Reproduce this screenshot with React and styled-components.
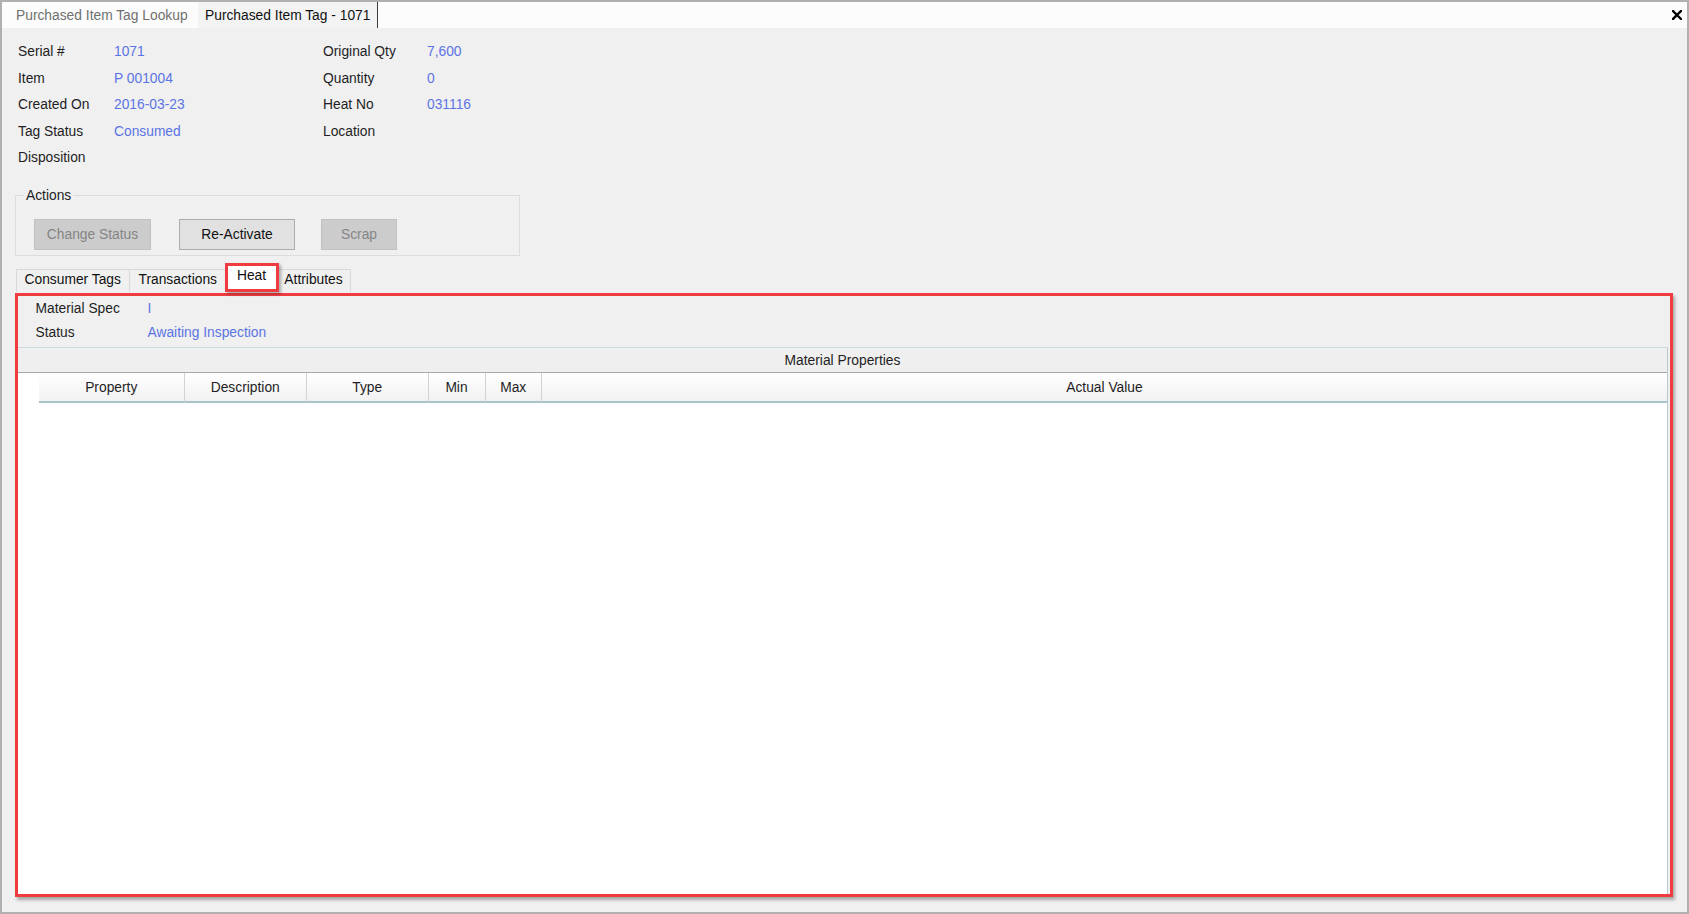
import React from 'react';
import styled, { createGlobalStyle } from 'styled-components';

const GlobalStyle = createGlobalStyle`
  html, body {
    margin: 0;
    padding: 0;
    background: #f0f0f0;
  }
  body {
    font-family: "Liberation Sans", Arial, sans-serif;
    font-size: 13.8px;
    color: #1e1e1e;
  }
  * { box-sizing: border-box; }
`;

const Window = styled.div`
  width: 1689px;
  height: 914px;
  border: 2px solid #b0b0b0;
  background: #f0f0f0;
  display: flex;
  flex-direction: column;
  overflow: hidden;
`;

// top document tabs
const DocStrip = styled.div`
  height: 26px;
  flex: none;
  background: #fcfcfc;
  display: flex;
  align-items: stretch;
`;

const DocTab = styled.div`
  width: ${p => p.w}px;
  padding-left: ${p => p.pad}px;
  display: flex;
  align-items: center;
  color: ${p => (p.active ? '#111' : '#707070')};
  background: ${p => (p.active ? '#f3f3f3' : 'transparent')};
  border-right: ${p => (p.active ? '1px solid #3a3a3a' : 'none')};
  white-space: nowrap;
`;

const CloseBtn = styled.div`
  margin-left: auto;
  margin-right: 5px;
  display: flex;
  align-items: center;
`;

// info fields
const InfoGrid = styled.div`
  display: grid;
  grid-template-columns: 96px 209px 104px 1fr;
  grid-auto-rows: 26.5px;
  align-items: center;
  padding: 10.5px 0 0 16px;
  flex: none;
`;

const Label = styled.div`
  color: #1e1e24;
  white-space: nowrap;
`;

const Value = styled.div`
  color: #5b74e4;
  white-space: nowrap;
`;

// actions group
const GroupBox = styled.div`
  margin: 24px 0 0 13px;
  width: 505px;
  border: 1px solid #dcdcdc;
  display: flex;
  flex-direction: column;
  flex: none;
`;

const Legend = styled.div`
  align-self: flex-start;
  margin: -8px 0 0 8px;
  padding: 0 2px;
  line-height: 16px;
  background: #f0f0f0;
  color: #1e1e24;
`;

const ButtonRow = styled.div`
  display: flex;
  padding: 14.5px 0 4.5px 18px;
`;

const Button = styled.div`
  width: ${p => p.w}px;
  margin-right: ${p => p.gap || 0}px;
  height: 31.5px;
  display: flex;
  align-items: center;
  justify-content: center;
  background: ${p => (p.disabled ? '#cccccc' : '#e1e1e1')};
  border: 1px solid ${p => (p.disabled ? '#c2c2c2' : '#adadad')};
  color: ${p => (p.disabled ? '#858585' : '#111')};
`;

// detail tabs
const TabRow = styled.div`
  display: flex;
  align-items: flex-end;
  height: 29px;
  margin: 7.5px 0 0 13.5px;
  flex: none;
`;

const Tab = styled.div`
  width: ${p => p.w}px;
  height: 23px;
  margin-left: ${p => p.ml || 0}px;
  padding-bottom: 4px;
  display: flex;
  align-items: center;
  justify-content: center;
  background: #f0f0f0;
  border: 1px solid #d9d9d9;
  border-bottom: none;
  color: #111;
  white-space: nowrap;
`;

const ActiveTab = styled.div`
  width: 54px;
  height: 29px;
  margin-left: -2px;
  position: relative;
  z-index: 1;
  display: flex;
  align-items: flex-start;
  justify-content: center;
  padding-top: 2px;
  background: #fff;
  border: 3px solid #f03c40;
  box-shadow: 2px 2px 3px rgba(0, 0, 0, 0.3);
  color: #111;
`;

const TabPage = styled.div`
  flex: 1;
  margin: 1px 14px 15px 13px;
  border: 3px solid #f03c40;
  box-shadow: 2px 3px 3px rgba(0, 0, 0, 0.3);
  background: #f0f0f0;
  display: flex;
  flex-direction: column;
  min-height: 0;
`;

const SpecRows = styled.div`
  display: grid;
  grid-template-columns: 112px 1fr;
  grid-auto-rows: 24px;
  align-items: center;
  padding: 0 0 3px 17.5px;
`;

const GridBox = styled.div`
  flex: 1;
  margin-right: 2px;
  display: flex;
  flex-direction: column;
  border-top: 1px solid #cdd8de;
  border-right: 1px solid #b7c9d0;
  background: #fff;
`;

const Band = styled.div`
  height: 25px;
  display: flex;
  align-items: center;
  justify-content: center;
  background: #efefef;
  border-bottom: 1px solid #a8a8a8;
  color: #1e1e24;
`;

const HeaderRow = styled.div`
  display: flex;
  height: 30px;
`;

const RowHead = styled.div`
  width: 21px;
  background: #fff;
`;

const HeaderCell = styled.div`
  width: ${p => (p.w ? `${p.w}px` : 'auto')};
  flex: ${p => (p.w ? 'none' : 1)};
  display: flex;
  align-items: center;
  justify-content: center;
  background: linear-gradient(#ffffff, #f1f1f1);
  border-right: 1px solid #d3d3d3;
  border-bottom: 2px solid #a9c3cb;
  color: #1e1e24;
  &:last-child { border-right: none; }
`;

const GridBody = styled.div`
  flex: 1;
  background: #fff;
`;

const fields = [
  ['Serial #', '1071', 'Original Qty', '7,600'],
  ['Item', 'P 001004', 'Quantity', '0'],
  ['Created On', '2016-03-23', 'Heat No', '031116'],
  ['Tag Status', 'Consumed', 'Location', ''],
  ['Disposition', '', '', ''],
];

const columns = [
  ['Property', 145.5],
  ['Description', 122.5],
  ['Type', 121.5],
  ['Min', 57],
  ['Max', 56.5],
  ['Actual Value', 0],
];

function App() {
  return (
    <>
      <GlobalStyle />
      <Window>
        <DocStrip>
          <DocTab w={196} pad={14}>Purchased Item Tag Lookup</DocTab>
          <DocTab w={180} pad={7} active>Purchased Item Tag - 1071</DocTab>
          <CloseBtn>
            <svg width="10" height="10" viewBox="0 0 10 10">
              <path d="M1 1 L9 9 M9 1 L1 9" stroke="#000" strokeWidth="2.4" strokeLinecap="square" />
            </svg>
          </CloseBtn>
        </DocStrip>

        <InfoGrid>
          {fields.map(f => (
            <React.Fragment key={f[0]}>
              <Label>{f[0]}</Label>
              <Value>{f[1]}</Value>
              <Label>{f[2]}</Label>
              <Value>{f[3]}</Value>
            </React.Fragment>
          ))}
        </InfoGrid>

        <GroupBox>
          <Legend>Actions</Legend>
          <ButtonRow>
            <Button w={117} gap={28} disabled>Change Status</Button>
            <Button w={116} gap={26}>Re-Activate</Button>
            <Button w={76} disabled>Scrap</Button>
          </ButtonRow>
        </GroupBox>

        <TabRow>
          <Tab w={114.5}>Consumer Tags</Tab>
          <Tab w={97.5} ml={-1}>Transactions</Tab>
          <ActiveTab>Heat</ActiveTab>
          <Tab w={74} ml={-2}>Attributes</Tab>
        </TabRow>

        <TabPage>
          <SpecRows>
            <Label>Material Spec</Label>
            <Value>I</Value>
            <Label>Status</Label>
            <Value>Awaiting Inspection</Value>
          </SpecRows>
          <GridBox>
            <Band>Material Properties</Band>
            <HeaderRow>
              <RowHead />
              {columns.map(([name, w]) => (
                <HeaderCell key={name} w={w}>{name}</HeaderCell>
              ))}
            </HeaderRow>
            <GridBody />
          </GridBox>
        </TabPage>
      </Window>
    </>
  );
}

export default App;
